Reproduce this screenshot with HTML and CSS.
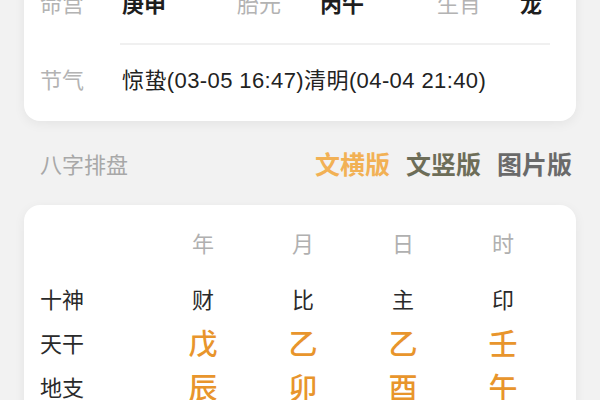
FILE: index.html
```html
<!DOCTYPE html>
<html lang="zh-CN">
<head>
<meta charset="utf-8">
<link rel="stylesheet" href="styles.css">
</head>
<body>
<div class="page">
  <section class="card info">
    <div class="info-grid">
      <span class="lbl">命宫</span><span class="val">庚申</span>
      <span class="lbl">胎元</span><span class="val">丙午</span>
      <span class="lbl">生肖</span><span class="val">龙</span>
    </div>
    <div class="divider"></div>
    <div class="term-row">
      <span class="lbl term-lbl">节气</span>
      <span class="term-val">惊蛰(03-05 16:47)清明(04-04 21:40)</span>
    </div>
  </section>

  <div class="section-head">
    <span class="section-title">八字排盘</span>
    <nav class="tabs">
      <span class="tab tab-active">文横版</span>
      <span class="tab tab-vert">文竖版</span>
      <span class="tab tab-pic">图片版</span>
    </nav>
  </div>

  <section class="card chart">
    <div class="chart-grid">
      <span class="row-lbl"></span>
      <span class="col-head">年</span>
      <span class="col-head">月</span>
      <span class="col-head">日</span>
      <span class="col-head">时</span>

      <span class="row-lbl first">十神</span>
      <span class="god first">财</span>
      <span class="god first">比</span>
      <span class="god first">主</span>
      <span class="god first">印</span>

      <span class="row-lbl">天干</span>
      <span class="stem">戊</span>
      <span class="stem">乙</span>
      <span class="stem">乙</span>
      <span class="stem">壬</span>

      <span class="row-lbl">地支</span>
      <span class="stem">辰</span>
      <span class="stem">卯</span>
      <span class="stem">酉</span>
      <span class="stem">午</span>
    </div>
  </section>
</div>
</body>
</html>
```

FILE: styles.css
```css
* { box-sizing: border-box; margin: 0; padding: 0; }

html, body {
  width: 600px;
  height: 400px;
  overflow: hidden;
  background: #f2f2f2;
}

body {
  font-family: "Noto Sans CJK SC", "Noto Sans", sans-serif;
  color: #222;
}

.page {
  display: flex;
  flex-direction: column;
  padding: 0 24px;
}

.card {
  background: #fff;
  border-radius: 16px;
  box-shadow: 0 3px 12px rgba(0, 0, 0, 0.06);
}

.info {
  margin-top: -40px;
  padding: 0 16px 0 16px;
}

.info-grid {
  display: grid;
  grid-template-columns: 82px 115px 83px 117px 83px 1fr;
  align-items: center;
  height: 64px;
  padding-top: 20px;
  font-size: 22px;
  line-height: 44px;
}

.lbl {
  color: #b3b3b3;
  font-size: 22px;
}

.val {
  color: #1e1e1e;
  font-weight: 700;
  font-size: 22px;
}

.divider {
  height: 2px;
  background: #f0f0f0;
  margin: 19px 10px 0 80px;
}

.term-row {
  display: flex;
  align-items: center;
  height: 76px;
  padding-bottom: 10px;
  font-size: 22px;
}

.term-lbl {
  width: 82px;
  flex: none;
}

.term-val {
  color: #222;
  font-family: "Liberation Sans", "Noto Sans CJK SC", sans-serif;
  letter-spacing: 0.4px;
}

.section-head {
  display: flex;
  align-items: center;
  justify-content: space-between;
  height: 84px;
  padding: 0 4px 0 16px;
}

.section-title {
  color: #a8a8a8;
  font-size: 22px;
}

.tabs {
  display: flex;
  gap: 16px;
}

.tab {
  font-size: 25px;
  font-weight: 700;
}

.tab-active { color: #f2b155; }
.tab-vert { color: #6d6d58; }
.tab-pic { color: #6a6a6a; }

.chart {
  padding: 15px 16px 0 16px;
  height: 240px;
}

.chart-grid {
  display: grid;
  grid-template-columns: 113px repeat(4, 100px);
  grid-template-rows: 44px 56px 44px 44px;
  line-height: 44px;
}

.first {
  align-self: end;
}

.row-lbl {
  color: #2a2a2a;
  font-size: 22px;
}

.col-head {
  text-align: center;
  color: #b0b0b0;
  font-size: 22px;
}

.god {
  text-align: center;
  color: #2a2a2a;
  font-size: 22px;
}

.stem {
  text-align: center;
  color: #e8952c;
  font-size: 29px;
  font-weight: 500;
}
```
